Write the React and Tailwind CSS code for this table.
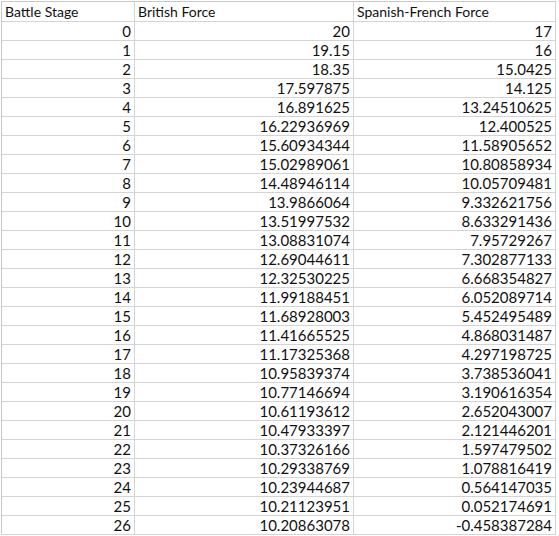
import React from "react";

const rows = [
    ["0", "20", "17"],
    ["1", "19.15", "16"],
    ["2", "18.35", "15.0425"],
    ["3", "17.597875", "14.125"],
    ["4", "16.891625", "13.24510625"],
    ["5", "16.22936969", "12.400525"],
    ["6", "15.60934344", "11.58905652"],
    ["7", "15.02989061", "10.80858934"],
    ["8", "14.48946114", "10.05709481"],
    ["9", "13.9866064", "9.332621756"],
    ["10", "13.51997532", "8.633291436"],
    ["11", "13.08831074", "7.95729267"],
    ["12", "12.69044611", "7.302877133"],
    ["13", "12.32530225", "6.668354827"],
    ["14", "11.99188451", "6.052089714"],
    ["15", "11.68928003", "5.452495489"],
    ["16", "11.41665525", "4.868031487"],
    ["17", "11.17325368", "4.297198725"],
    ["18", "10.95839374", "3.738536041"],
    ["19", "10.77146694", "3.190616354"],
    ["20", "10.61193612", "2.652043007"],
    ["21", "10.47933397", "2.121446201"],
    ["22", "10.37326166", "1.597479502"],
    ["23", "10.29338769", "1.078816419"],
    ["24", "10.23944687", "0.564147035"],
    ["25", "10.21123951", "0.052174691"],
    ["26", "10.20863078", "-0.458387284"],
];

const cell = "border-r border-b border-[#d4d4d4] px-[3px] h-[19px] leading-[18px] overflow-hidden whitespace-nowrap";
const head = cell + " h-[20px] leading-[20px] text-[14px]";

export default function App() {
    return (
        <div className="w-[559px] h-[536px] bg-white overflow-hidden pt-[1px] pl-[1px] font-['Lato',sans-serif] text-[15px] text-[#111]">
            <div className="grid grid-cols-[133px_219px_202px] border-t border-l border-[#c8c8c8] w-fit">
                <div className={head}>Battle Stage</div>
                <div className={head}>British Force</div>
                <div className={head}>Spanish-French Force</div>
                {rows.map((r) => (
                    <React.Fragment key={r[0]}>
                        <div className={cell + " text-right"}>{r[0]}</div>
                        <div className={cell + " text-right"}>{r[1]}</div>
                        <div className={cell + " text-right"}>{r[2]}</div>
                    </React.Fragment>
                ))}
            </div>
        </div>
    );
}
